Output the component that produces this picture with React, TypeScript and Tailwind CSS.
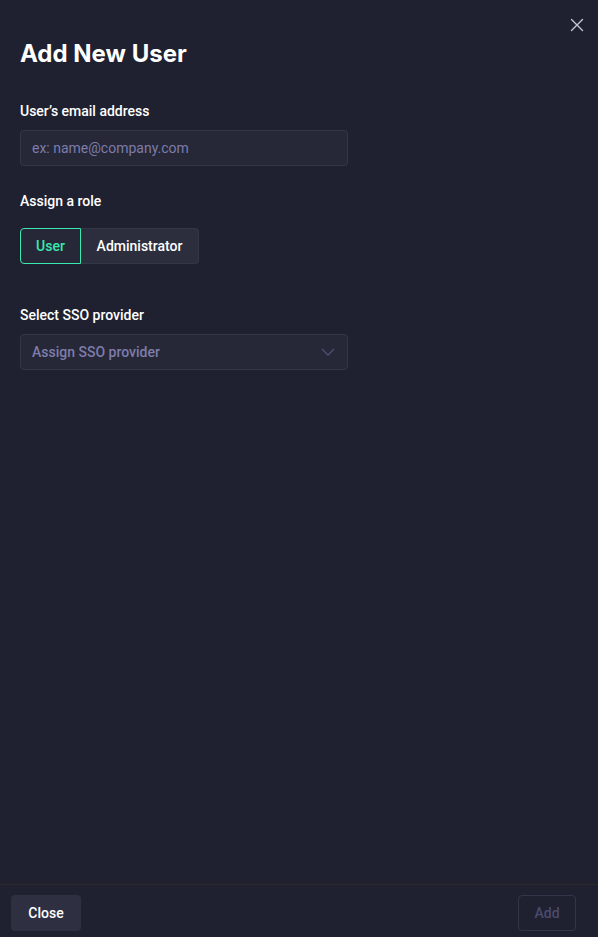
import { useState } from 'react';

export default function App() {
  const [role, setRole] = useState<'user' | 'admin'>('user');

  return (
    <div
      className="relative flex h-[937px] w-[598px] flex-col bg-[#1f2130] text-white"
      style={{ fontFamily: 'Roboto, Inter, "Noto Sans", sans-serif' }}
    >
      <button
        type="button"
        aria-label="Close"
        className="absolute right-[14px] top-[18px] text-[#c4c6d4]"
      >
        <svg width="14" height="14" viewBox="0 0 14 14" fill="none">
          <path d="M1.5 1.5l11 11M12.5 1.5l-11 11" stroke="currentColor" strokeWidth="1.4" strokeLinecap="round" />
        </svg>
      </button>

      <div className="flex-1 px-5 pt-[38px]">
        <h1
          className="text-[24px] font-bold leading-[32px]"
          style={{ fontFamily: 'Inter, "Noto Sans", sans-serif' }}
        >
          Add New User
        </h1>

        <label className="mt-[31px] block text-[14px] font-medium leading-[20px]">User’s email address</label>
        <input
          type="email"
          placeholder="ex: name@company.com"
          className="mt-[9px] h-[36px] w-[328px] rounded-[4px] border border-[#34374a] bg-[#262837] pl-[11px] pr-3 text-[14px] text-white placeholder:text-[#7e7caa] focus:outline-none"
        />

        <p className="mt-[25px] text-[14px] font-medium leading-[20px]">Assign a role</p>
        <div className="mt-[17px] flex">
          <button
            type="button"
            onClick={() => setRole('user')}
            className={
              role === 'user'
                ? 'h-[36px] w-[61px] rounded-l-[4px] border border-[#3ae8b0] bg-[#262837] text-[14px] font-medium text-[#3ae8b0]'
                : 'h-[36px] w-[61px] rounded-l-[4px] border border-[#34374a] bg-[#2c2e3e] text-[14px] font-medium text-white'
            }
          >
            User
          </button>
          <button
            type="button"
            onClick={() => setRole('admin')}
            className={
              role === 'admin'
                ? 'h-[36px] w-[118px] rounded-r-[4px] border border-[#3ae8b0] bg-[#262837] text-[14px] font-medium text-[#3ae8b0]'
                : 'h-[36px] w-[118px] rounded-r-[4px] border border-l-0 border-[#34374a] bg-[#2c2e3e] text-[14px] font-medium text-white'
            }
          >
            Administrator
          </button>
        </div>

        <p className="mt-[41px] text-[14px] font-medium leading-[20px]">Select SSO provider</p>
        <button
          type="button"
          className="mt-[9px] flex h-[36px] w-[328px] items-center justify-between rounded-[4px] border border-[#34374a] bg-[#262837] pl-[11px] pr-[12px] text-[14px] font-medium text-[#7e7caa]"
        >
          <span>Assign SSO provider</span>
          <svg width="14" height="9" viewBox="0 0 14 9" fill="none" className="text-[#4f5070]">
            <path d="M1 1l6 6 6-6" stroke="currentColor" strokeWidth="1.3" />
          </svg>
        </button>
      </div>

      <div className="flex h-[53px] items-start justify-between border-t border-[#2c2b28] px-[11px] pt-[10px]">
        <button
          type="button"
          className="h-[36px] w-[70px] rounded-[4px] bg-[#2e3041] text-[14px] font-medium text-white"
        >
          Close
        </button>
        <button
          type="button"
          disabled
          className="mr-[11px] h-[36px] w-[58px] rounded-[4px] border border-[#33354a] text-[14px] font-medium text-[#4b4a6e]"
        >
          Add
        </button>
      </div>
    </div>
  );
}
